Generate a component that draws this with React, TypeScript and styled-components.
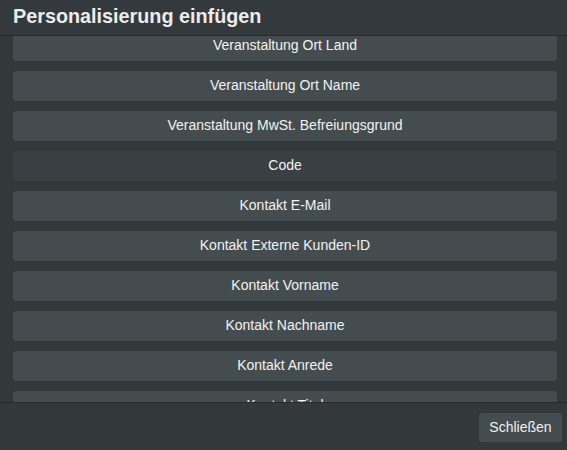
import React, { useEffect, useRef } from 'react';
import styled, { createGlobalStyle } from 'styled-components';

const fields = [
  'Veranstaltung Name',
  'Veranstaltung Datum',
  'Veranstaltung Uhrzeit',
  'Veranstaltung Ort',
  'Veranstaltung Ort Stadt',
  'Veranstaltung Ort Land',
  'Veranstaltung Ort Name',
  'Veranstaltung MwSt. Befreiungsgrund',
  'Code',
  'Kontakt E-Mail',
  'Kontakt Externe Kunden-ID',
  'Kontakt Vorname',
  'Kontakt Nachname',
  'Kontakt Anrede',
  'Kontakt Titel',
  'Kontakt Firma',
  'Kontakt Telefon',
];

const HOVERED = 'Code';
const FIRST_VISIBLE = 5;

const App: React.FC = () => {
  const listRef = useRef<HTMLDivElement>(null);

  useEffect(() => {
    if (listRef.current) {
      listRef.current.scrollTop = 15 + FIRST_VISIBLE * 40;
    }
  }, []);

  return (
    <>
      <GlobalStyle />
      <Dialog>
        <Header>
          <Title>Personalisierung einfügen</Title>
        </Header>
        <List ref={listRef}>
          {fields.map((field) => (
            <FieldButton key={field} $hover={field === HOVERED}>
              {field}
            </FieldButton>
          ))}
        </List>
        <Footer>
          <CloseButton>Schließen</CloseButton>
        </Footer>
      </Dialog>
    </>
  );
};

const GlobalStyle = createGlobalStyle`
  html, body {
    margin: 0;
    padding: 0;
    background: #33383b;
  }
  body {
    font-family: "Liberation Sans", Arial, sans-serif;
  }
`;

const Dialog = styled.div`
  width: 567px;
  height: 450px;
  display: flex;
  flex-direction: column;
  background: #33383b;
  color: #f0f0f0;
`;

const Header = styled.div`
  height: 36px;
  flex: none;
  display: flex;
  align-items: center;
  padding: 0 13px;
  box-sizing: border-box;
  background: #34393d;
  border-bottom: 1px solid #262a2d;
`;

const Title = styled.h1`
  margin: 0;
  font-size: 19.8px;
  font-weight: 700;
  color: #ececec;
  padding-bottom: 2px;
`;

const List = styled.div`
  flex: 1;
  min-height: 0;
  overflow-y: scroll;
  display: flex;
  flex-direction: column;
  gap: 10px;
  padding: 10px 0 10px 13px;

  &::-webkit-scrollbar {
    width: 10px;
  }
  &::-webkit-scrollbar-track {
    background: #2d3134;
  }
  &::-webkit-scrollbar-thumb {
    background: #2d3134;
  }
`;

const FieldButton = styled.button<{ $hover?: boolean }>`
  flex: none;
  height: 30px;
  width: 544px;
  border: none;
  border-radius: 3px;
  background: ${(p) => (p.$hover ? '#3a3f43' : '#454c4f')};
  color: #f2f2f2;
  font-family: "Liberation Sans", Arial, sans-serif;
  font-size: 14px;
  padding: 0 0 2px;
  cursor: pointer;
`;

const Footer = styled.div`
  height: 48px;
  flex: none;
  display: flex;
  justify-content: flex-end;
  align-items: flex-start;
  padding: 10px 5px 0 0;
  box-sizing: border-box;
  background: #33383b;
  border-top: 1px solid #262a2d;
`;

const CloseButton = styled.button`
  width: 83px;
  height: 29px;
  border: none;
  border-radius: 3px;
  background: #454c4f;
  color: #f0f0f0;
  font-family: "Liberation Sans", Arial, sans-serif;
  font-size: 14px;
  padding: 0 0 1px;
  cursor: pointer;
`;

export default App;
